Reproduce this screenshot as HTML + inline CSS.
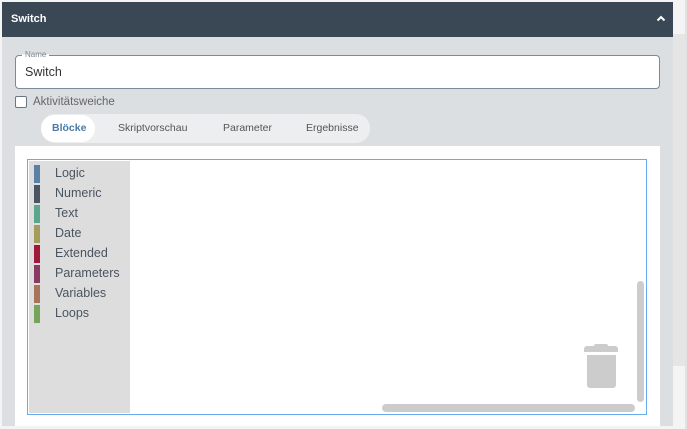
<!DOCTYPE html>
<html><head><style>
*{margin:0;padding:0;box-sizing:border-box}
body{width:687px;height:429px;background:#f4f4f4;font-family:"Liberation Sans",Arial,sans-serif;position:relative;overflow:hidden}
.a{position:absolute}
</style></head><body>
<div class="a" style="left:673px;top:34px;width:12px;height:332px;background:#e5e5e5"></div>
<div class="a" style="left:685px;top:0;width:2px;height:429px;background:#e2e2e2"></div>
<div class="a" style="left:2px;top:2px;width:671px;height:35px;background:#3a4754"></div>
<div class="a" style="left:11px;top:13px;color:#fff;font-size:11px;font-weight:bold">Switch</div>
<svg class="a" style="left:656px;top:15px" width="10" height="7"><path d="M1.5 5.5 L5 2 L8.5 5.5" stroke="#fff" stroke-width="2" fill="none"/></svg>
<div class="a" style="left:2px;top:37px;width:671px;height:389px;background:#dbdfe2"></div>
<div class="a" style="left:15px;top:55px;width:645px;height:34px;background:#fff;border:1px solid #7a8a9a;border-radius:4px"></div>
<div class="a" style="left:22px;top:50px;padding:0 3px;font-size:8px;color:#7b8690;background:linear-gradient(#dbdfe2 50%,#fff 50%)">Name</div>
<div class="a" style="left:25px;top:65px;font-size:12.5px;color:#333">Switch</div>
<div class="a" style="left:15px;top:96px;width:12px;height:12px;border:1px solid #6b7580;border-radius:2px;background:#fff"></div>
<div class="a" style="left:33px;top:96px;font-size:11.5px;color:#666">Aktivitätsweiche</div>
<div class="a" style="left:41px;top:114px;width:329px;height:29px;background:#eceef0;border-radius:14px"></div>
<div class="a" style="left:41px;top:115px;width:54px;height:27px;background:#fff;border-radius:14px"></div>
<div class="a" style="left:52px;top:122px;font-size:10.5px;color:#4a7aa8;font-weight:bold">Blöcke</div>
<div class="a" style="left:118px;top:122px;font-size:10.5px;color:#555">Skriptvorschau</div>
<div class="a" style="left:223px;top:122px;font-size:10.5px;color:#555">Parameter</div>
<div class="a" style="left:306px;top:122px;font-size:10.5px;color:#555">Ergebnisse</div>
<div class="a" style="left:15px;top:146px;width:645px;height:280px;background:#fff"></div>
<div class="a" style="left:27px;top:159px;width:620px;height:256px;border:1px solid #6aaaee"></div>
<div class="a" style="left:29px;top:161px;width:101px;height:252px;background:#dddddd"></div>
<div class="a" style="left:34px;top:163px;font-size:12.5px;color:#4a5460;line-height:20px">
<div><span style="display:inline-block;width:6px;height:18px;background:#5b80a5;vertical-align:middle;margin-right:15px"></span>Logic</div>
<div><span style="display:inline-block;width:6px;height:18px;background:#4a5462;vertical-align:middle;margin-right:15px"></span>Numeric</div>
<div><span style="display:inline-block;width:6px;height:18px;background:#5ba58c;vertical-align:middle;margin-right:15px"></span>Text</div>
<div><span style="display:inline-block;width:6px;height:18px;background:#a59b5b;vertical-align:middle;margin-right:15px"></span>Date</div>
<div><span style="display:inline-block;width:6px;height:18px;background:#a0193c;vertical-align:middle;margin-right:15px"></span>Extended</div>
<div><span style="display:inline-block;width:6px;height:18px;background:#8a3a62;vertical-align:middle;margin-right:15px"></span>Parameters</div>
<div><span style="display:inline-block;width:6px;height:18px;background:#a5745b;vertical-align:middle;margin-right:15px"></span>Variables</div>
<div><span style="display:inline-block;width:6px;height:18px;background:#74a55b;vertical-align:middle;margin-right:15px"></span>Loops</div>
</div>
<div class="a" style="left:637px;top:281px;width:7px;height:121px;background:#ccc;border-radius:4px"></div>
<div class="a" style="left:382px;top:404px;width:253px;height:8px;background:#ccc;border-radius:4px"></div>
<div class="a" style="left:584px;top:346px;width:34px;height:6px;background:#ccc;border-radius:3px 3px 0 0"></div>
<div class="a" style="left:594px;top:344px;width:14px;height:4px;background:#ccc;border-radius:3px"></div>
<div class="a" style="left:587px;top:355px;width:29px;height:33px;background:#ccc;border-radius:0 0 3px 3px"></div>
</body></html>
